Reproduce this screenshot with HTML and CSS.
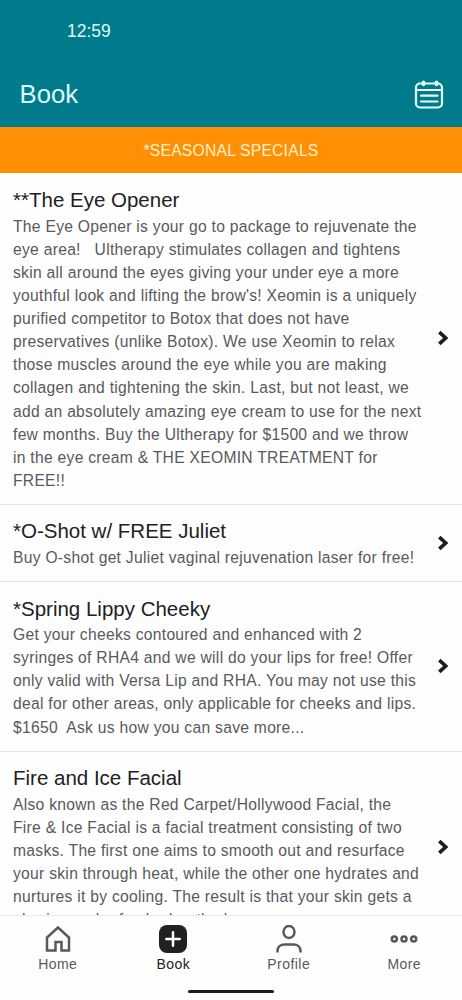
FILE: index.html
```html
<!DOCTYPE html>
<html lang="en">
<head>
<meta charset="utf-8">
<title>Book</title>
<link rel="stylesheet" href="styles.css">
</head>
<body>
<div class="screen">
<header class="header">
<div class="clock">12:59</div>
<div class="titlebar">
<h1 class="page-title">Book</h1>
<svg class="calendar" viewBox="0 0 30 30" fill="none" stroke="currentColor" stroke-width="2.200" stroke-linecap="round"><rect x="2" y="3.500" width="26" height="24" rx="4"/><path d="M2 10h26M7 15.700h16.500M7 21.500h16.500"/><path d="M9.500 2.200v2.300M22.500 2.200v2.300" stroke-width="3.600"/></svg>
</div>
</header>
<div class="category">*SEASONAL SPECIALS</div>
<main class="list">
<article class="item">
<div class="body">
<h2 class="name">**The Eye Opener</h2>
<p class="desc">The Eye Opener is your go to package to rejuvenate the
eye area!   Ultherapy stimulates collagen and tightens
skin all around the eyes giving your under eye a more
youthful look and lifting the brow's! Xeomin is a uniquely
purified competitor to Botox that does not have
preservatives (unlike Botox). We use Xeomin to relax
those muscles around the eye while you are making
collagen and tightening the skin. Last, but not least, we
add an absolutely amazing eye cream to use for the next
few months. Buy the Ultherapy for $1500 and we throw
in the eye cream &amp; THE XEOMIN TREATMENT for
FREE!!</p>
</div>
<svg class="chevron" viewBox="0 0 12 16"><path d="M2.300 2.200 8.700 8l-6.400 5.800"/></svg>
</article>
<article class="item">
<div class="body">
<h2 class="name">*O-Shot w/ FREE Juliet</h2>
<p class="desc">Buy O-shot get Juliet vaginal rejuvenation laser for free!</p>
</div>
<svg class="chevron" viewBox="0 0 12 16"><path d="M2.300 2.200 8.700 8l-6.400 5.800"/></svg>
</article>
<article class="item">
<div class="body">
<h2 class="name">*Spring Lippy Cheeky</h2>
<p class="desc">Get your cheeks contoured and enhanced with 2
syringes of RHA4 and we will do your lips for free! Offer
only valid with Versa Lip and RHA. You may not use this
deal for other areas, only applicable for cheeks and lips.
$1650  Ask us how you can save more...</p>
</div>
<svg class="chevron" viewBox="0 0 12 16"><path d="M2.300 2.200 8.700 8l-6.400 5.800"/></svg>
</article>
<article class="item">
<div class="body">
<h2 class="name">Fire and Ice Facial</h2>
<p class="desc">Also known as the Red Carpet/Hollywood Facial, the
Fire &amp; Ice Facial is a facial treatment consisting of two
masks. The first one aims to smooth out and resurface
your skin through heat, while the other one hydrates and
nurtures it by cooling. The result is that your skin gets a
glowing and refreshed or the base</p>
</div>
<svg class="chevron" viewBox="0 0 12 16"><path d="M2.300 2.200 8.700 8l-6.400 5.800"/></svg>
</article>
</main>
<nav class="tabs">
<a class="tab"><svg class="tab-icon" viewBox="0 0 28 28"><path d="M3 25.500V12.500L14 2.500l11 10v13h-7.500v-8.500h-6v8.500z"/></svg><span>Home</span></a>
<a class="tab active"><svg class="tab-icon" viewBox="0 0 28 28"><rect class="solid" x="0" y="0" width="28" height="28" rx="8"/><path class="plus" d="M14 7.300v13.400M7.300 14h13.400"/></svg><span>Book</span></a>
<a class="tab"><svg class="tab-icon" viewBox="0 0 28 28"><ellipse cx="14" cy="7" rx="5.500" ry="6"/><path d="M2.500 27.500v-1.500c0-4 3-6.500 7-6.500h9c4 0 7 2.500 7 6.500v1.500"/></svg><span>Profile</span></a>
<a class="tab"><svg class="tab-icon" viewBox="0 0 28 28"><circle cx="4.300" cy="14" r="2.500"/><circle cx="14" cy="14" r="2.500"/><circle cx="23.700" cy="14" r="2.500"/></svg><span>More</span></a>
</nav>
<div class="gesture"><div class="handle"></div></div>
</div>
</body>
</html>
```
FILE: styles.css
```css
* { box-sizing: border-box; }
body { margin: 0; font-family: "Liberation Sans", Arial, sans-serif; background: #fff; }
.screen { width: 462px; height: 1000px; overflow: hidden; display: flex; flex-direction: column; background: #fefefe; }
.header { height: 127px; flex: none; background: #017a8c; color: #dcfbff; }
.clock { height: 62px; padding-left: 67px; font-size: 17.500px; line-height: 62px; }
.titlebar { height: 65px; display: flex; align-items: center; justify-content: space-between; padding: 0 18px 0 19.500px; }
.page-title { margin: 0; font-size: 25.700px; font-weight: 400; line-height: 65px; }
.calendar { width: 30px; height: 30px; color: #e6ffff; }
.category { height: 46px; flex: none; background: #ff9003; color: #fff1cf; text-align: center; font-size: 15.650px; line-height: 47px; letter-spacing: 0.240px; }
.list { flex: 1; min-height: 0; overflow: hidden; padding-top: 0.600px; }
.item { display: flex; align-items: center; justify-content: space-between; padding: 12.500px 13px 11.900px; border-bottom: 1px solid #e4e4e4; }
.name { margin: 0 0 1px; font-size: 20.500px; font-weight: 400; line-height: 27.500px; color: #202123; white-space: nowrap; }
.desc { margin: 0; font-size: 15.650px; line-height: 23.130px; letter-spacing: 0.280px; color: #58595b; white-space: pre; }
.body { width: 412px; flex: none; }
.chevron { width: 12px; height: 16px; flex: none; margin-bottom: 1.500px; fill: none; stroke: #1c1d1f; stroke-width: 3.600; }
.tabs { height: 62px; flex: none; display: flex; border-top: 1px solid #e8e8e8; }
.tab { flex: 1; display: flex; flex-direction: column; align-items: center; padding-top: 9px; color: #58595b; font-size: 14px; line-height: 23px; letter-spacing: 0.450px; }
.tab.active { color: #202123; }
.tab-icon { width: 28px; height: 28px; fill: none; stroke: currentColor; stroke-width: 2.500; }
.solid { fill: currentColor; stroke: none; }
.plus { stroke: #fff; stroke-width: 2.500; stroke-linecap: round; }
.gesture { height: 23px; flex: none; display: flex; justify-content: center; padding-top: 13px; }
.handle { width: 86px; height: 3px; border-radius: 2px; background: #1c1d1f; }
```
